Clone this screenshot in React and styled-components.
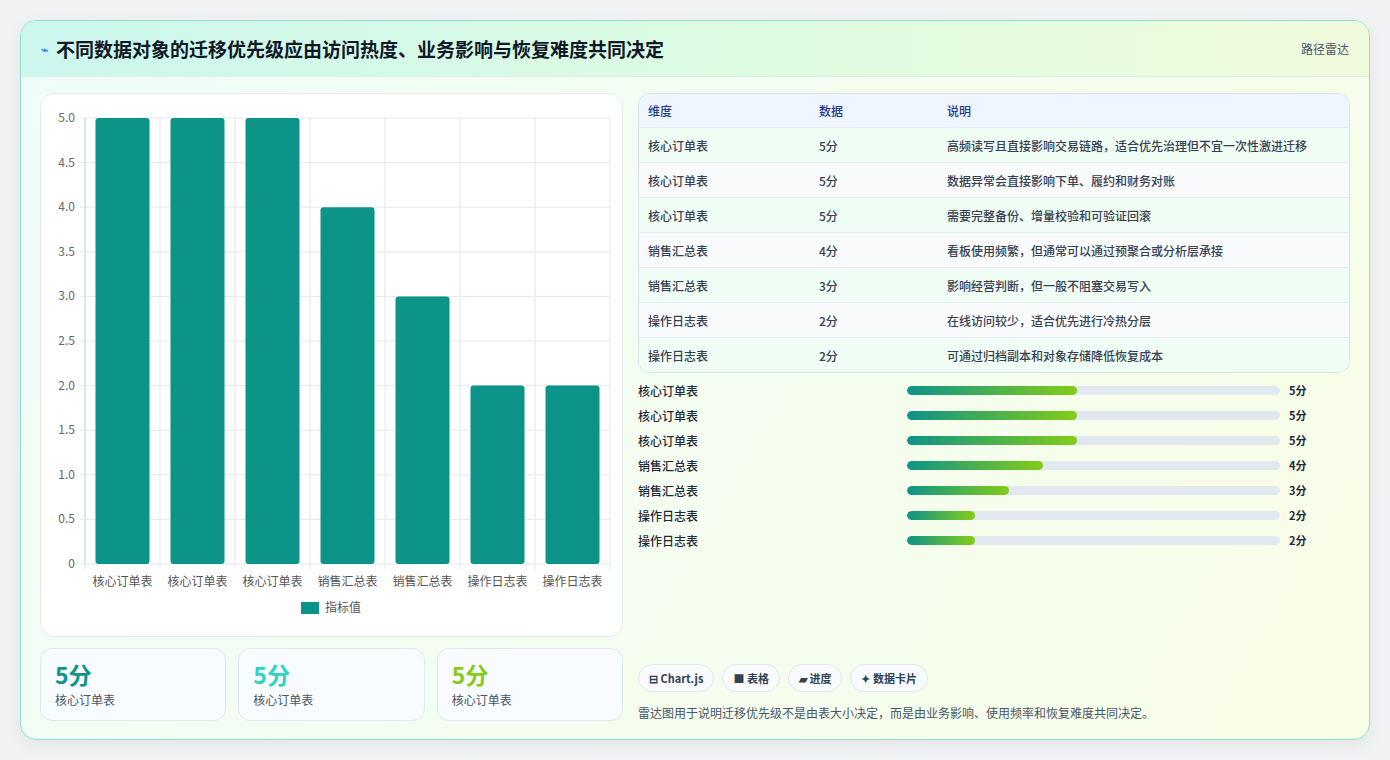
import React from "react";
import styled, { createGlobalStyle } from "styled-components";

const Global = createGlobalStyle`
  body { margin: 0; background: #f1f2f3; font-family: "Noto Sans CJK SC", "Noto Sans", sans-serif; }
`;

const Page = styled.div`
  padding: 20px;
  height: 760px;
  box-sizing: border-box;
`;

const Card = styled.div`
  height: 720px;
  box-sizing: border-box;
  border: 1px solid #8ee0d2;
  border-radius: 16px;
  overflow: hidden;
  background: linear-gradient(120deg, #effdf8 0%, #f4fdf0 50%, #f8fde6 100%);
  box-shadow: 0 6px 18px rgba(0,0,0,0.06);
  display: flex;
  flex-direction: column;
`;

const Header = styled.div`
  height: 55px;
  flex: none;
  display: flex;
  align-items: center;
  justify-content: space-between;
  padding: 0 20px;
  background: linear-gradient(90deg, #ccf7ee 0%, #dcfbe2 50%, #f0fbdc 100%);
  border-bottom: 1px solid #d8f0e6;
`;

const Title = styled.h1`
  margin: 0;
  font-size: 19px;
  font-weight: 700;
  color: #111827;
  display: flex;
  align-items: center;
  gap: 8px;
`;

const Tag = styled.span`
  font-size: 12px;
  color: #4b5563;
`;

const Body = styled.div`
  flex: 1;
  display: grid;
  grid-template-columns: 583px 1fr;
  gap: 15px;
  padding: 16px 19px 18px 19px;
`;

const Col = styled.div`
  display: flex;
  flex-direction: column;
  gap: 11px;
  min-height: 0;
`;

const ChartBox = styled.div`
  height: 544px;
  background: #fff;
  border: 1px solid #e3ece8;
  border-radius: 14px;
  box-sizing: border-box;
`;

const Stats = styled.div`
  display: grid;
  grid-template-columns: repeat(3, 1fr);
  gap: 12px;
`;

const Stat = styled.div`
  height: 73px;
  box-sizing: border-box;
  background: #f8fbff;
  border: 1px solid #dfe8ef;
  border-radius: 12px;
  padding: 10px 14px;
`;

const StatValue = styled.div`
  font-size: 23px;
  font-weight: 700;
  line-height: 30px;
  color: ${(p) => p.$c};
`;

const StatLabel = styled.div`
  font-size: 12px;
  color: #4b5563;
  margin-top: 2px;
`;

const Table = styled.div`
  border: 1px solid #d6e3ea;
  border-radius: 12px;
  overflow: hidden;
  background: #fff;
`;

const Row = styled.div`
  display: grid;
  grid-template-columns: 171px 128px 1fr;
  height: ${(p) => (p.$head ? 33 : 35)}px;
  align-items: center;
  padding-left: 9px;
  font-size: 12px;
  font-weight: ${(p) => (p.$head ? 500 : 500)};
  color: ${(p) => (p.$head ? "#1e3a8a" : "#374151")};
  background: ${(p) => (p.$head ? "#eff6ff" : p.$alt ? "#f8fafc" : "#f0fdf4")};
  border-top: ${(p) => (p.$head ? "none" : "1px solid #e5edf2")};
  box-sizing: border-box;
`;

const Bars = styled.div`
  display: flex;
  flex-direction: column;
  gap: 7px;
  margin-top: 8px;
  flex: 1;
`;

const BarRow = styled.div`
  display: grid;
  grid-template-columns: 269px 373px 1fr;
  align-items: center;
  gap: 0;
  height: 18px;
  font-size: 12px;
  color: #1f2937;
  font-weight: 500;
`;

const Track = styled.div`
  height: 9px;
  border-radius: 5px;
  background: #e2e8f0;
  overflow: hidden;
`;

const Fill = styled.div`
  height: 100%;
  border-radius: 5px;
  background: linear-gradient(90deg, #0d9488, #84cc16);
`;

const Val = styled.span`
  padding-left: 9px;
  font-weight: 700;
  font-size: 11px;
`;

const Chips = styled.div`
  display: flex;
  gap: 8px;
`;

const Chip = styled.span`
  height: 28px;
  box-sizing: border-box;
  padding: 0 10px;
  display: inline-flex;
  align-items: center;
  gap: 4px;
  border: 1px solid #e2e8f0;
  border-radius: 14px;
  background: #f8fafc;
  font-size: 11px;
  font-weight: 600;
  color: #334155;
`;

const Note = styled.p`
  margin: 12px 0 0;
  font-size: 12px;
  color: #475569;
`;

const rows = [
  ["核心订单表", 5, "高频读写且直接影响交易链路，适合优先治理但不宜一次性激进迁移"],
  ["核心订单表", 5, "数据异常会直接影响下单、履约和财务对账"],
  ["核心订单表", 5, "需要完整备份、增量校验和可验证回滚"],
  ["销售汇总表", 4, "看板使用频繁，但通常可以通过预聚合或分析层承接"],
  ["销售汇总表", 3, "影响经营判断，但一般不阻塞交易写入"],
  ["操作日志表", 2, "在线访问较少，适合优先进行冷热分层"],
  ["操作日志表", 2, "可通过归档副本和对象存储降低恢复成本"],
];

const Chart = () => {
  const x0 = 44, x1 = 569, yT = 24, yB = 470;
  const cw = (x1 - x0) / 7;
  const y = (v) => yB - (v / 5) * (yB - yT);
  const ticks = [0, 0.5, 1, 1.5, 2, 2.5, 3, 3.5, 4, 4.5, 5];
  return (
    <svg width="581" height="542" style={{ display: "block" }} fontFamily="Noto Sans CJK SC, sans-serif">
      {ticks.map((t) => (
        <g key={t}>
          <line x1={x0 - 5} x2={x1} y1={y(t)} y2={y(t)} stroke="#e5e7eb" />
          <text x={x0 - 10} y={y(t) + 4} fontSize="12" fill="#666" textAnchor="end">
            {t === 0 ? "0" : t.toFixed(1)}
          </text>
        </g>
      ))}
      {Array.from({ length: 8 }).map((_, i) => (
        <line key={i} x1={x0 + i * cw} x2={x0 + i * cw} y1={yT} y2={yB + 5} stroke="#e5e7eb" />
      ))}
      <line x1={x0} x2={x0} y1={yT} y2={yB} stroke="#cbd5e1" />
      {rows.map((r, i) => (
        <g key={i}>
          <rect x={x0 + i * cw + 10.5} y={y(r[1])} width={cw - 21} height={yB - y(r[1])} rx="3" fill="#0d9488" />
          <text x={x0 + i * cw + cw / 2} y={yB + 22} fontSize="12" fill="#555" textAnchor="middle">{r[0]}</text>
        </g>
      ))}
      <rect x="260" y="508" width="18" height="12" fill="#0d9488" />
      <text x="284" y="518" fontSize="12" fill="#555">指标值</text>
    </svg>
  );
};

export default function App() {
  return (
    <Page>
      <Global />
      <Card>
        <Header>
          <Title><span style={{ color: "#3b82f6", fontSize: 12 }}>⌁</span>不同数据对象的迁移优先级应由访问热度、业务影响与恢复难度共同决定</Title>
          <Tag>路径雷达</Tag>
        </Header>
        <Body>
          <Col>
            <ChartBox><Chart /></ChartBox>
            <Stats>
              {["#0d9488", "#2dd4bf", "#84cc16"].map((c) => (
                <Stat key={c}>
                  <StatValue $c={c}>5分</StatValue>
                  <StatLabel>核心订单表</StatLabel>
                </Stat>
              ))}
            </Stats>
          </Col>
          <Col style={{ gap: 0 }}>
            <Table>
              <Row $head><span>维度</span><span>数据</span><span>说明</span></Row>
              {rows.map((r, i) => (
                <Row key={i} $alt={i % 2 === 1}><span>{r[0]}</span><span>{r[1]}分</span><span>{r[2]}</span></Row>
              ))}
            </Table>
            <Bars>
              {rows.map((r, i) => (
                <BarRow key={i}>
                  <span>{r[0]}</span>
                  <Track><Fill style={{ width: `${r[1] * 9.1}%` }} /></Track>
                  <Val>{r[1]}分</Val>
                </BarRow>
              ))}
            </Bars>
            <Chips>
              <Chip>⊟ Chart.js</Chip>
              <Chip>■ 表格</Chip>
              <Chip>▰ 进度</Chip>
              <Chip>✦ 数据卡片</Chip>
            </Chips>
            <Note>雷达图用于说明迁移优先级不是由表大小决定，而是由业务影响、使用频率和恢复难度共同决定。</Note>
          </Col>
        </Body>
      </Card>
    </Page>
  );
}
